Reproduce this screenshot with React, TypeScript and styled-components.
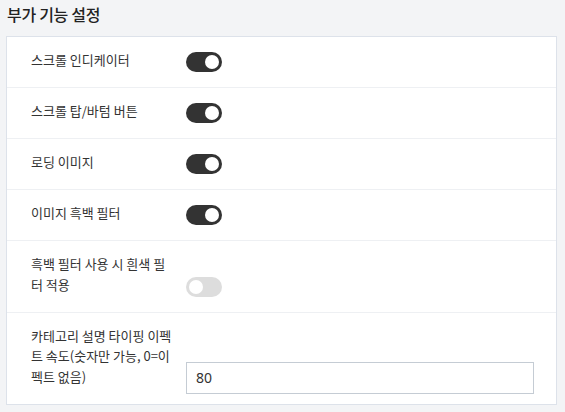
import React, { useState } from "react";
import styled, { createGlobalStyle } from "styled-components";

const Global = createGlobalStyle`
  html, body { margin: 0; padding: 0; background: #f3f4f6; }
  body {
    font-family: "Noto Sans CJK KR", "Noto Sans", sans-serif;
    color: #222;
  }
  * { box-sizing: border-box; }
`;

const Page = styled.div`
  width: 565px;
  height: 412px;
  padding: 3px 8px 0 6px;
  background: #f3f4f6;
`;

const Title = styled.h2`
  margin: 0 0 11px 1px;
  font-size: 16px;
  line-height: 22px;
  font-weight: 500;
  color: #222;
  letter-spacing: -0.3px;
`;

const Panel = styled.div`
  background: #fff;
  border: 1px solid #dde2ea;
`;

const Row = styled.div<{ $last?: boolean }>`
  display: flex;
  align-items: flex-end;
  padding: 13px 22px 16.5px 24px;
  border-bottom: ${(p) => (p.$last ? "none" : "1px solid #eef0f3")};
`;

const Label = styled.div`
  width: 145px;
  flex: none;
  margin-right: 10px;
  font-size: 13px;
  line-height: 20.5px;
  color: #333;
`;

const Control = styled.div`
  flex: 1;
  display: flex;
`;

const Track = styled.button<{ $on: boolean }>`
  position: relative;
  width: 36px;
  height: 20px;
  padding: 0;
  border: none;
  border-radius: 10px;
  margin-bottom: -1.5px;
  background: ${(p) => (p.$on ? "#333" : "#ddd")};
  cursor: pointer;
`;

const Knob = styled.span<{ $on: boolean }>`
  position: absolute;
  top: 3px;
  left: ${(p) => (p.$on ? "19px" : "3px")};
  width: 14px;
  height: 14px;
  border-radius: 50%;
  background: #fff;
`;

const Input = styled.input`
  width: 348px;
  height: 32px;
  margin-bottom: -6.5px;
  padding: 0 9px;
  border: 1px solid #c5ccd4;
  border-radius: 0;
  font-family: "Noto Sans", "Noto Sans CJK KR", sans-serif;
  font-size: 14px;
  color: #333;
  outline: none;
`;

function Toggle({ initial }: { initial: boolean }) {
  const [on, setOn] = useState(initial);
  return (
    <Track $on={on} onClick={() => setOn(!on)}>
      <Knob $on={on} />
    </Track>
  );
}

const toggles: [string, boolean][] = [
  ["스크롤 인디케이터", true],
  ["스크롤 탑/바텀 버튼", true],
  ["로딩 이미지", true],
  ["이미지 흑백 필터", true],
  ["흑백 필터 사용 시 흰색 필터 적용", false],
];

export default function App() {
  return (
    <>
      <Global />
      <Page>
        <Title>부가 기능 설정</Title>
        <Panel>
          {toggles.map(([label, on]) => (
            <Row key={label}>
              <Label>{label}</Label>
              <Control>
                <Toggle initial={on} />
              </Control>
            </Row>
          ))}
          <Row $last>
            <Label>카테고리 설명 타이핑 이펙트 속도(숫자만 가능, 0=이펙트 없음)</Label>
            <Control>
              <Input defaultValue="80" />
            </Control>
          </Row>
        </Panel>
      </Page>
    </>
  );
}
